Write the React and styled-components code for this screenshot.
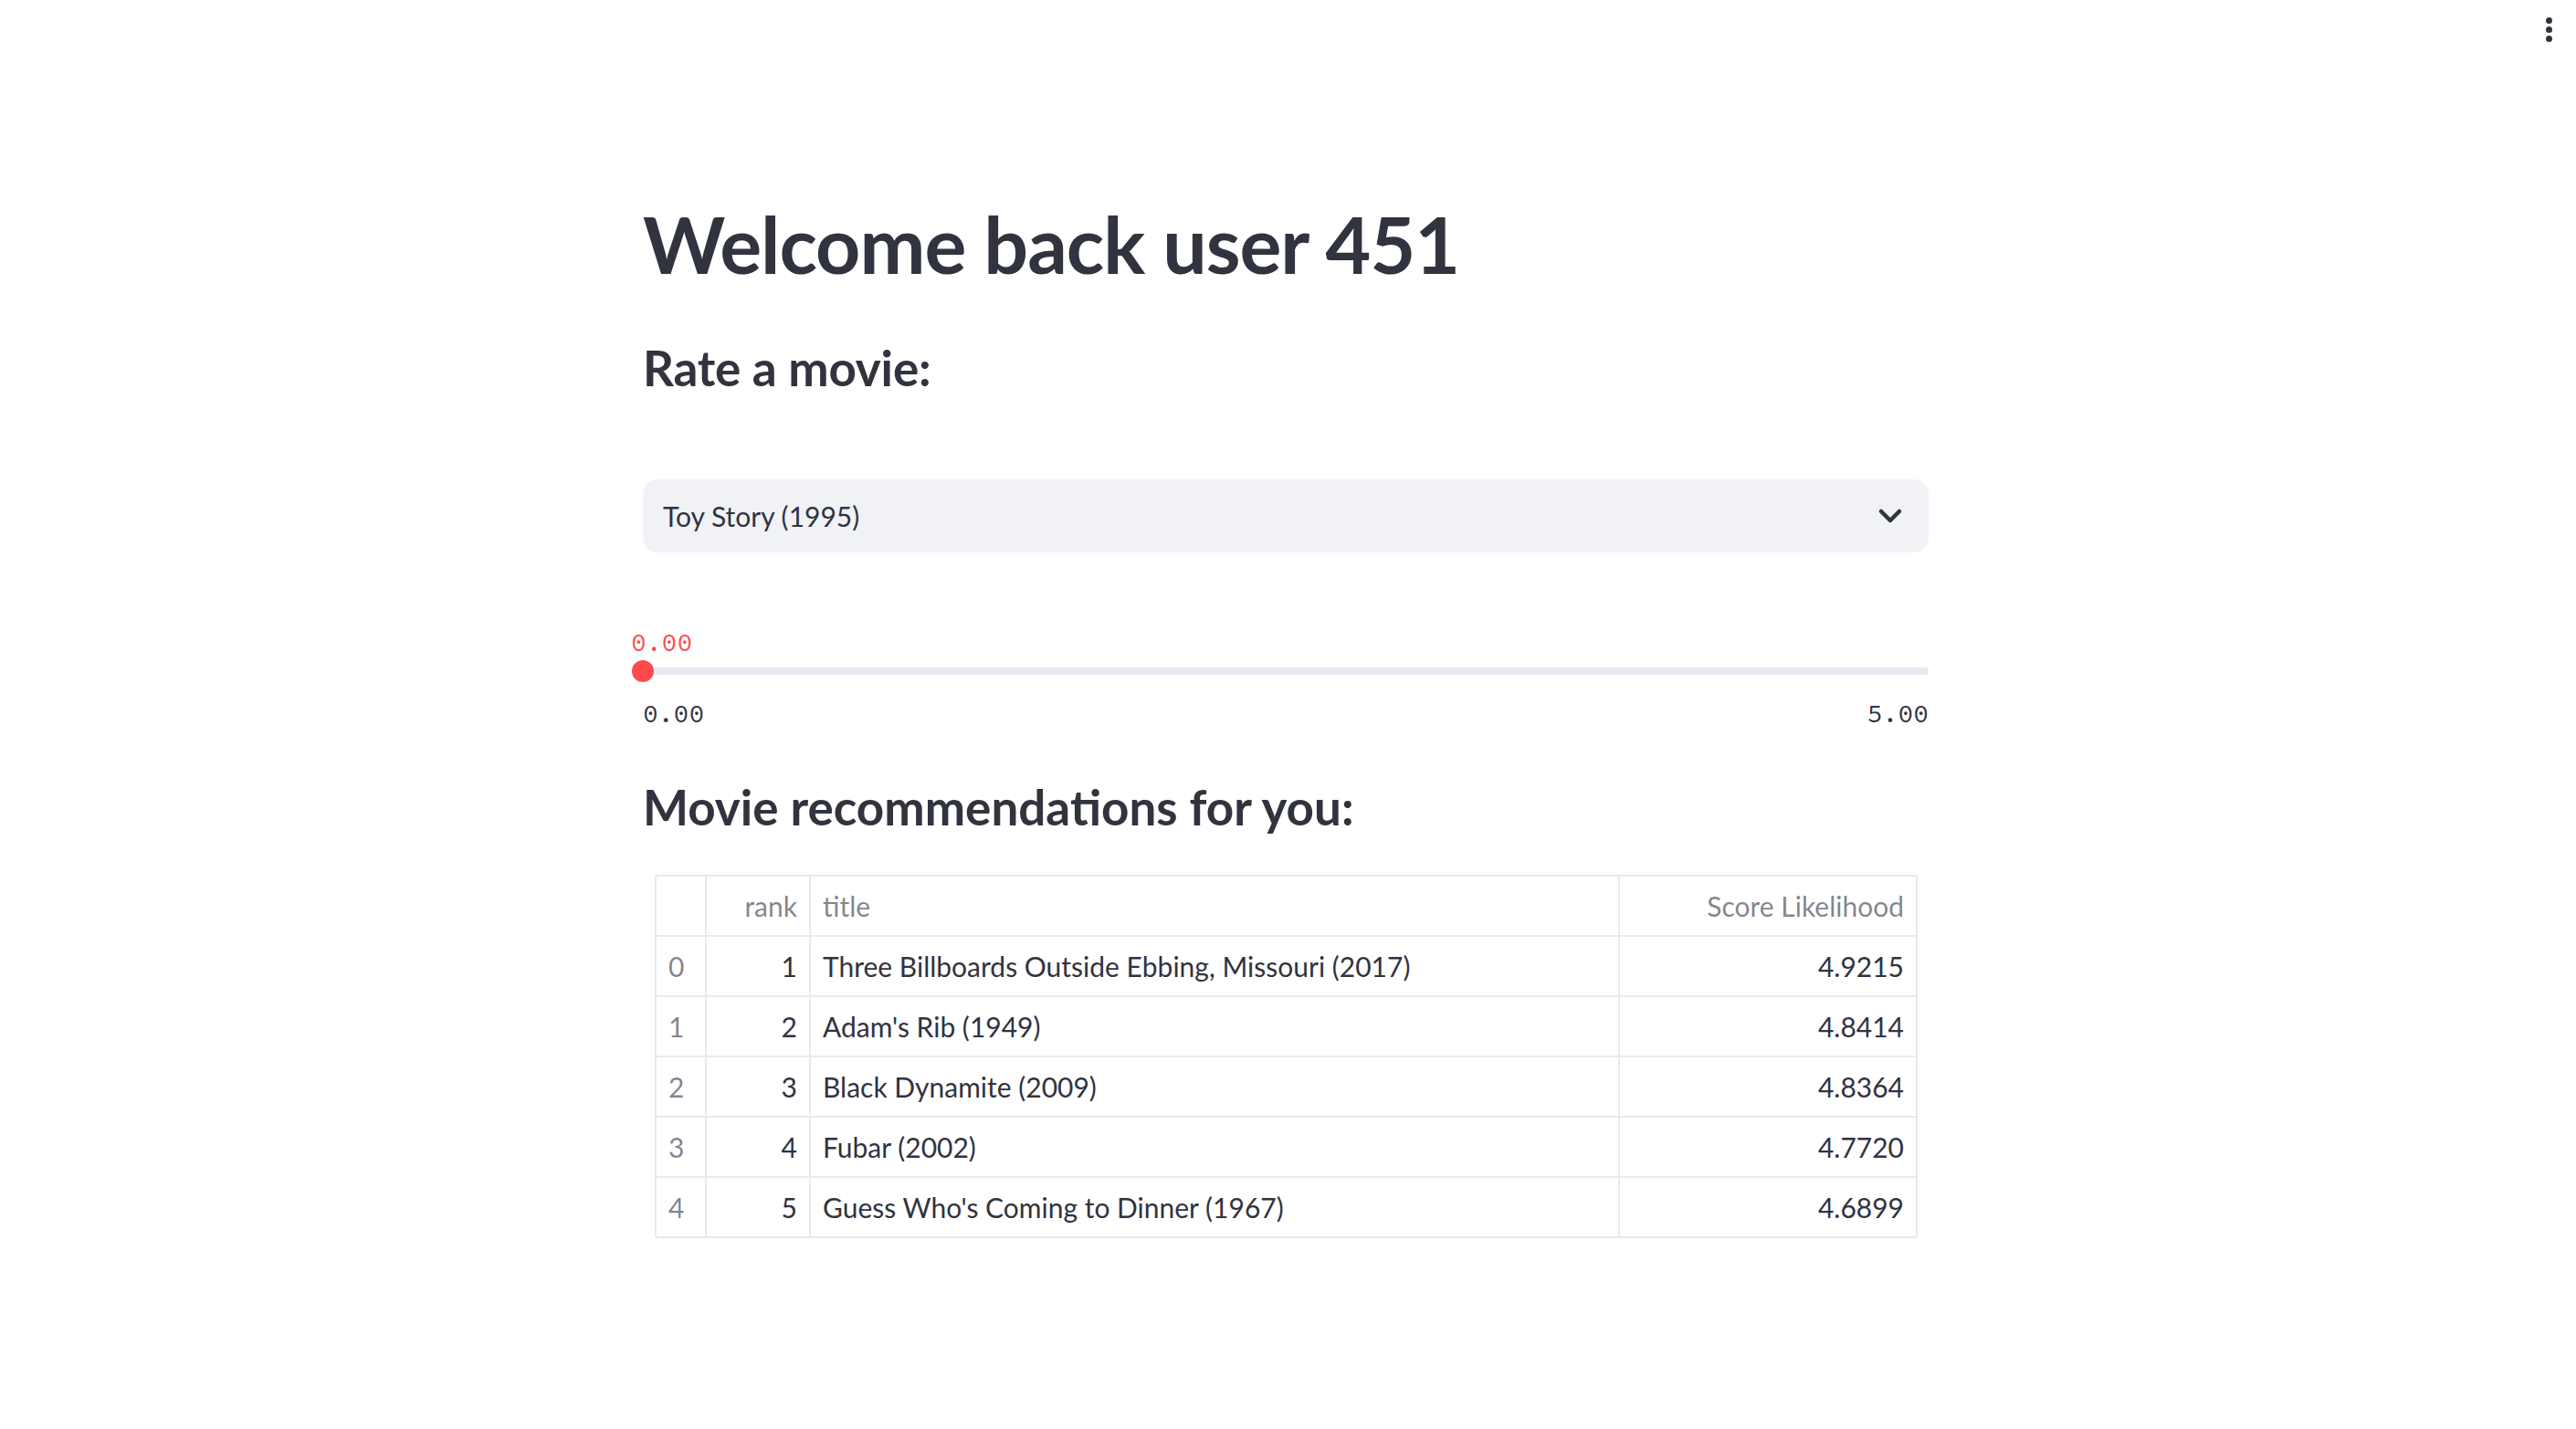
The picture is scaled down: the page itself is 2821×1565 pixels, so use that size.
import React from "react";
import styled, { createGlobalStyle } from "styled-components";

const GlobalStyle = createGlobalStyle`
  html, body {
    margin: 0;
    padding: 0;
    background: #ffffff;
  }
  body {
    font-family: "Source Sans Pro", Lato, "Noto Sans", sans-serif;
    color: #31333f;
  }
  * { box-sizing: border-box; }
`;

const Page = styled.div`
  position: relative;
  min-height: 1565px;
  width: 100%;
  background: #ffffff;
  display: flex;
  justify-content: center;
  padding-right: 5px;
`;

const MenuButton = styled.div`
  position: absolute;
  top: 14px;
  right: 18px;
  width: 24px;
  height: 36px;
  display: flex;
  flex-direction: column;
  align-items: center;
  justify-content: center;
  gap: 3px;
`;

const Dot = styled.span`
  width: 7px;
  height: 7px;
  border-radius: 50%;
  background: #31333f;
`;

const Main = styled.main`
  width: 1408px;
  flex: 0 0 1408px;
  padding-top: 214px;
  display: flex;
  flex-direction: column;
`;

const Title = styled.h1`
  margin: 0;
  font-size: 86px;
  font-weight: 700;
  line-height: 106px;
  height: 106px;
  color: #31333f;
  letter-spacing: -1px;
  white-space: nowrap;
`;

const SubHeading = styled.h3`
  margin: ${(p) => p.$top}px 0 0 0;
  font-size: 53px;
  font-weight: 700;
  line-height: 77px;
  height: 77px;
  color: #31333f;
  letter-spacing: ${(p) => p.$spacing || "-0.2px"};
  white-space: nowrap;
`;

const Select = styled.div`
  margin-top: 84px;
  height: 80px;
  background: #f0f2f6;
  border-radius: 16px;
  display: flex;
  align-items: center;
  justify-content: space-between;
  padding: 0 22px 0 22px;
  font-size: 30px;
  color: #31333f;
`;

const SliderBlock = styled.div`
  margin-top: 78px;
  display: flex;
  flex-direction: column;
`;

const Mono = styled.div`
  font-family: "Source Code Pro", "DejaVu Sans Mono", "Liberation Mono", monospace;
  font-size: 28px;
  line-height: 40px;
  height: 40px;
`;

const ValueLabel = styled(Mono)`
  color: #ff4b4b;
  margin-left: -13px;
`;

const TrackRow = styled.div`
  position: relative;
  height: 24px;
  display: flex;
  align-items: center;
`;

const Track = styled.div`
  width: 100%;
  height: 8px;
  border-radius: 4px;
  background: #e6eaf1;
`;

const Thumb = styled.div`
  position: absolute;
  left: -12px;
  top: 0;
  width: 24px;
  height: 24px;
  border-radius: 50%;
  background: #ff4b4b;
`;

const Ticks = styled(Mono)`
  margin-top: 14px;
  display: flex;
  justify-content: space-between;
  color: #31333f;
`;

const Table = styled.table`
  margin: 36px 12px 0 13px;
  border-collapse: collapse;
  table-layout: fixed;
  width: 1381px;
  font-size: 30px;
  color: #31333f;
  border: 2px solid #eaeaec;
`;

const Row = styled.tr`
  height: 66px;
  border-bottom: 2px solid #eaeaec;
`;

const Cell = styled.td`
  padding: 0 13px;
  border-right: 2px solid #eaeaec;
  text-align: ${(p) => (p.$right ? "right" : "left")};
  color: ${(p) => (p.$muted ? "rgba(49, 51, 63, 0.6)" : "#31333f")};
  font-weight: 400;
  white-space: nowrap;
  vertical-align: middle;
`;

const HeadCell = styled(Cell).attrs({ as: "th" })``;

const Chevron = () => (
  <svg width="40" height="40" viewBox="0 0 24 24" fill="none" stroke="#31333f" strokeWidth="2.7" strokeLinecap="round" strokeLinejoin="round">
    <path d="M6 9l6 6 6-6" />
  </svg>
);

const rows = [
  [0, 1, "Three Billboards Outside Ebbing, Missouri (2017)", "4.9215"],
  [1, 2, "Adam's Rib (1949)", "4.8414"],
  [2, 3, "Black Dynamite (2009)", "4.8364"],
  [3, 4, "Fubar (2002)", "4.7720"],
  [4, 5, "Guess Who's Coming to Dinner (1967)", "4.6899"],
];

export default function App() {
  return (
    <Page>
      <GlobalStyle />
      <MenuButton>
        <Dot />
        <Dot />
        <Dot />
      </MenuButton>
      <Main>
        <Title>Welcome back user 451</Title>
        <SubHeading $top={44}>Rate a movie:</SubHeading>
        <Select>
          <span>Toy Story (1995)</span>
          <Chevron />
        </Select>
        <SliderBlock>
          <ValueLabel>0.00</ValueLabel>
          <TrackRow>
            <Track />
            <Thumb />
          </TrackRow>
          <Ticks>
            <span>0.00</span>
            <span>5.00</span>
          </Ticks>
        </SliderBlock>
        <SubHeading $top={44} $spacing="0px">Movie recommendations for you:</SubHeading>
        <Table>
          <colgroup>
            <col style={{ width: 55 }} />
            <col style={{ width: 114 }} />
            <col style={{ width: 886 }} />
            <col style={{ width: 326 }} />
          </colgroup>
          <thead>
            <Row>
              <HeadCell />
              <HeadCell $right $muted>rank</HeadCell>
              <HeadCell $muted>title</HeadCell>
              <HeadCell $right $muted>Score Likelihood</HeadCell>
            </Row>
          </thead>
          <tbody>
            {rows.map((r) => (
              <Row key={r[0]}>
                <Cell $muted>{r[0]}</Cell>
                <Cell $right>{r[1]}</Cell>
                <Cell>{r[2]}</Cell>
                <Cell $right>{r[3]}</Cell>
              </Row>
            ))}
          </tbody>
        </Table>
      </Main>
    </Page>
  );
}
